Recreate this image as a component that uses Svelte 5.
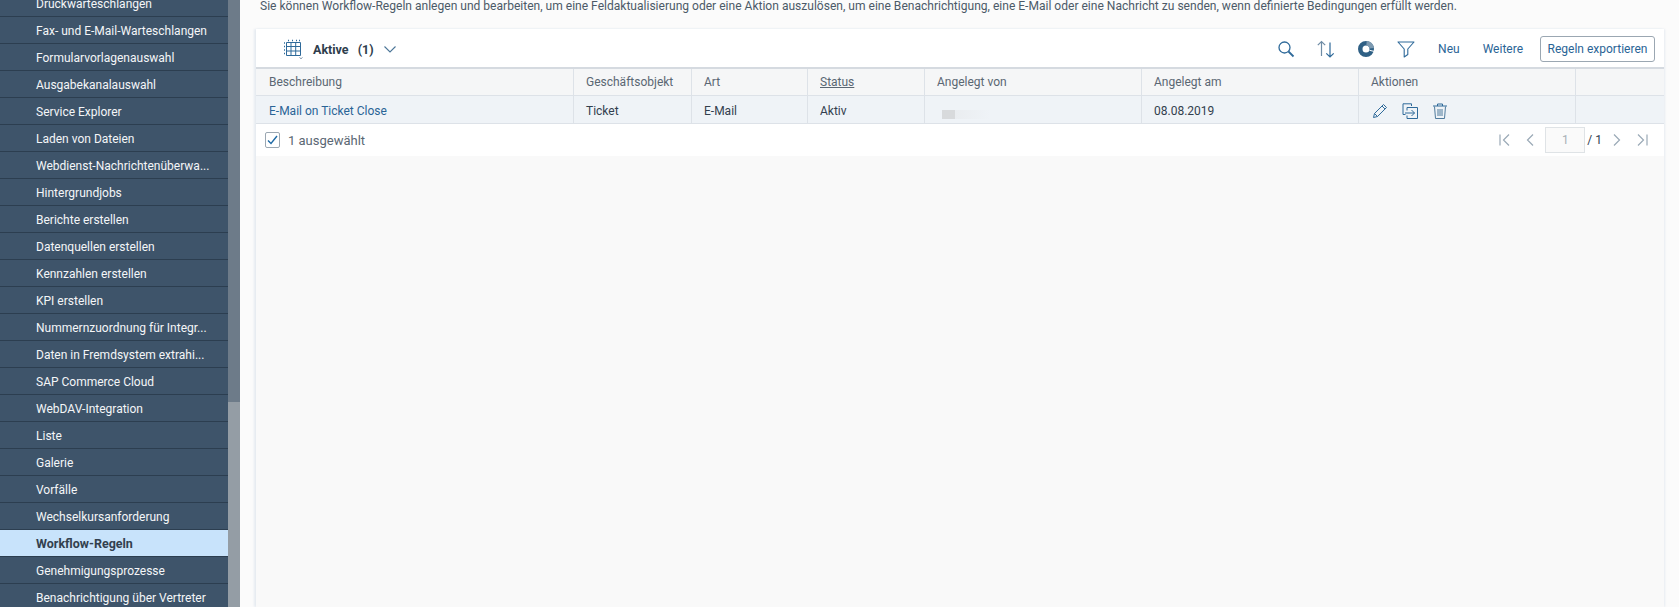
<script lang="ts">
	const navItems = [
		'Druckwarteschlangen',
		'Fax- und E-Mail-Warteschlangen',
		'Formularvorlagenauswahl',
		'Ausgabekanalauswahl',
		'Service Explorer',
		'Laden von Dateien',
		'Webdienst-Nachrichtenüberwa...',
		'Hintergrundjobs',
		'Berichte erstellen',
		'Datenquellen erstellen',
		'Kennzahlen erstellen',
		'KPI erstellen',
		'Nummernzuordnung für Integr...',
		'Daten in Fremdsystem extrahi...',
		'SAP Commerce Cloud',
		'WebDAV-Integration',
		'Liste',
		'Galerie',
		'Vorfälle',
		'Wechselkursanforderung',
		'Workflow-Regeln',
		'Genehmigungsprozesse',
		'Benachrichtigung über Vertreter'
	];
	const active = 'Workflow-Regeln';

	const columns = [
		{ label: 'Beschreibung' },
		{ label: 'Geschäftsobjekt' },
		{ label: 'Art' },
		{ label: 'Status', sorted: true },
		{ label: 'Angelegt von' },
		{ label: 'Angelegt am' },
		{ label: 'Aktionen' },
		{ label: '' }
	];
</script>

<div class="page">
	<nav class="sidebar">
		<ul class="nav-list">
			{#each navItems as item}
				<li class:active={item === active}>{item}</li>
			{/each}
		</ul>
		<div class="scrollbar"><div class="thumb"></div></div>
	</nav>

	<main class="main">
		<p class="intro">
			Sie können Workflow-Regeln anlegen und bearbeiten, um eine Feldaktualisierung oder eine Aktion auszulösen, um eine Benachrichtigung, eine E-Mail oder eine Nachricht zu senden, wenn definierte Bedingungen erfüllt werden.
		</p>

		<section class="card">
			<header class="toolbar">
				<div class="view-select">
					<svg class="grid-icon" width="20" height="20" viewBox="0 0 20 20" fill="none" stroke="#2f6a9a" stroke-width="1">
						<path d="M3.500 3.500h14v13h-14zM3.500 7.500h14M3.500 12h14M8 3.500v13M12.700 3.500v13" />
						<path d="M1 4h1M1 7.500h1M1 11h1M1 14.500h1M5 1.500h1M9 1.500h1M13 1.500h1M16 1.500h1" stroke-width="1.400" />
						<path d="M16.500 18.500l1.500 1.200 1.500-1.200" stroke="#7d93a8" />
					</svg>
					<span class="view-title">Aktive</span>
					<span class="view-count">(1)</span>
					<svg width="14" height="9" viewBox="0 0 14 9" fill="none" stroke="#4b7597" stroke-width="1.100">
						<path d="M1.500 1.500L7 7l5.500-5.500" />
					</svg>
				</div>

				<div class="tools">
					<svg class="tool" width="18" height="18" viewBox="0 0 18 18" fill="none" stroke="#2f6a9a" stroke-width="1.300">
						<circle cx="7.500" cy="7.500" r="5.500" />
						<path d="M11.500 11.500L16.500 16.500" stroke-width="1.800" />
					</svg>
					<svg class="tool" width="20" height="20" viewBox="0 0 20 20" fill="none" stroke="#6f8ca5" stroke-width="1.200">
						<path d="M5.500 17V2.500M1.800 6.200L5.500 2.500l3.700 3.700" />
						<path d="M14 3.500V18M10.300 14.300L14 18l3.700-3.700" stroke="#2f6a9a" />
					</svg>
					<svg class="tool donut" width="18" height="18" viewBox="0 0 18 18" fill="none" stroke-width="4.500">
						<circle cx="9" cy="9" r="5.750" stroke="#2f6085" />
						<path d="M9.500 3.270A5.750 5.750 0 0 1 14.700 8.200" stroke="#7d9ab1" />
						<path d="M12.500 10.300l5 1.200" stroke="#fff" stroke-width="1" />
					</svg>
					<svg class="tool last-tool" width="18" height="18" viewBox="0 0 18 18" fill="none" stroke="#2f6a9a" stroke-width="1.100">
						<path d="M1 2h16l-6.200 7v5.500l-3.600 2.500V9z" stroke-linejoin="round" />
					</svg>
					<button class="text-btn neu">Neu</button>
					<button class="text-btn">Weitere</button>
					<button class="outline-btn">Regeln exportieren</button>
				</div>
			</header>

			<div class="row head">
				{#each columns as col}
					<div class="cell"><span class:sorted={col.sorted}>{col.label}</span></div>
				{/each}
			</div>

			<div class="row body">
				<div class="cell"><span class="link">E-Mail on Ticket Close</span></div>
				<div class="cell">Ticket</div>
				<div class="cell">E-Mail</div>
				<div class="cell">Aktiv</div>
				<div class="cell"><span class="redacted"></span></div>
				<div class="cell">08.08.2019</div>
				<div class="cell actions">
					<svg width="16" height="16" viewBox="0 0 16 16" fill="none" stroke="#2f6a9a" stroke-width="1">
						<path d="M1.500 14.500l1-4L11.500 1.500l3 3-9 9zM2.500 10.500l3 3M10 3l3 3" stroke-linejoin="round" />
					</svg>
					<svg width="16" height="16" viewBox="0 0 16 16" fill="none" stroke="#2f6a9a" stroke-width="1">
						<path d="M3.500 11.500H1V.8h8.500V3" />
						<path d="M5 7.500v-3h10.500v11H5v-3" />
						<path d="M3 10h9.500M9.500 7l3 3-3 3" />
					</svg>
					<svg width="16" height="16" viewBox="0 0 16 16" fill="none" stroke="#4f7a9c" stroke-width="1">
						<path d="M1 3h14M5.500 3V1h5v2" stroke="#2f6a9a" />
						<path d="M2.500 3.500l1 12h9l1-12M6 6v7M8 6v7M10 6v7" />
					</svg>
				</div>
				<div class="cell"></div>
			</div>

			<footer class="table-foot">
				<div class="selected">
					<span class="checkbox">
						<svg width="11" height="10" viewBox="0 0 11 10" fill="none" stroke="#1f6aa5" stroke-width="1.400">
							<path d="M1 5.500L4 8.500 10 1" />
						</svg>
					</span>
					<span>1 ausgewählt</span>
				</div>
				<div class="pager">
					<svg width="14" height="14" viewBox="0 0 14 14" fill="none" stroke="#9aa9b6" stroke-width="1.200"><path d="M2 1.500v11M11 1.500L5.500 7l5.500 5.500" /></svg>
					<svg class="prev" width="14" height="14" viewBox="0 0 14 14" fill="none" stroke="#9aa9b6" stroke-width="1.200"><path d="M10 1.500L4.500 7l5.500 5.500" /></svg>
					<span class="page-input">1</span>
					<span class="page-total">/ 1</span>
					<svg class="next" width="14" height="14" viewBox="0 0 14 14" fill="none" stroke="#9aa9b6" stroke-width="1.200"><path d="M4 1.500L9.500 7 4 12.500" /></svg>
					<svg width="14" height="14" viewBox="0 0 14 14" fill="none" stroke="#9aa9b6" stroke-width="1.200"><path d="M12 1.500v11M3 1.500L8.500 7 3 12.500" /></svg>
				</div>
			</footer>

			<div class="empty"></div>
		</section>
	</main>
</div>

<style>
	:global(body) {
		margin: 0;
		background: #fbfbfb;
	}

	.page {
		display: flex;
		height: 607px;
		overflow: hidden;
		font-family: Roboto, 'Liberation Sans', sans-serif;
		font-size: 12px;
	}

	.sidebar {
		display: flex;
		width: 240px;
		flex: none;
	}

	.nav-list {
		width: 228px;
		margin: -10px 0 0;
		padding: 0;
		list-style: none;
		background: #3e546a;
	}

	.nav-list li {
		box-sizing: border-box;
		height: 27px;
		padding-left: 36px;
		border-bottom: 1px solid #2c3e50;
		color: #f4f6f8;
		line-height: 28px;
		white-space: nowrap;
	}

	.nav-list li.active {
		background: #c8e3fb;
		color: #32404e;
		font-size: 12.500px;
		font-weight: 700;
	}

	.scrollbar {
		width: 12px;
		background: #949da5;
	}

	.thumb {
		height: 402px;
		background: #6d7b89;
	}

	.main {
		display: flex;
		flex: 1;
		flex-direction: column;
		min-width: 0;
		padding-left: 16px;
		padding-right: 15px;
	}

	.intro {
		margin: 0;
		height: 29px;
		padding-left: 4px;
		color: #4c5a68;
		font-size: 12.050px;
		line-height: 13px;
		white-space: nowrap;
	}

	.card {
		display: flex;
		flex: 1;
		flex-direction: column;
		background: #f9f9f9;
		box-shadow: -2px 0 2px #e6ebf1, 1px 0 2px #e6ebf1;
	}

	.toolbar {
		display: flex;
		align-items: center;
		justify-content: space-between;
		box-sizing: border-box;
		height: 40px;
		padding: 2px 9px 0 27px;
		background: #fff;
		border-bottom: 2px solid #d5dae0;
	}

	.view-select {
		display: flex;
		align-items: center;
		color: #2e3d4c;
		font-size: 12.500px;
		font-weight: 700;
	}

	.grid-icon {
		margin-right: 10px;
	}

	.view-count {
		margin-left: 9px;
		margin-right: 9px;
	}

	.tools {
		display: flex;
		align-items: center;
	}

	.tool {
		margin-right: 21px;
	}

	.donut {
		margin-right: 22px;
	}

	.last-tool {
		margin-right: 23px;
	}

	.text-btn {
		padding: 0;
		border: 0;
		background: none;
		color: #2a6496;
		font: inherit;
	}

	.neu {
		margin-right: 23px;
	}

	.outline-btn {
		box-sizing: border-box;
		width: 115px;
		height: 26px;
		margin-left: 17px;
		padding: 0;
		border: 1px solid #9ba7b2;
		border-radius: 3px;
		background: #fff;
		color: #2a6496;
		font: inherit;
	}

	.row {
		display: grid;
		grid-template-columns: 317.500px 118px 116px 117px 217px 217px 217px 89px;
		height: 27px;
		border-bottom: 1px solid #dde2e8;
	}

	.cell {
		display: flex;
		align-items: center;
		box-sizing: border-box;
		padding-left: 12.500px;
		border-right: 1px solid #dde2e8;
		color: #32404e;
		white-space: nowrap;
	}

	.cell:first-child {
		padding-left: 13px;
	}

	.cell:last-child {
		border-right: 0;
	}

	.head {
		height: 26px;
		background: #f5f6f7;
	}

	.head .cell {
		color: #5a6773;
	}

	.sorted {
		text-decoration: underline;
	}

	.body {
		background: #eff3f7;
	}

	.body .cell {
		padding-top: 2px;
	}

	.link {
		color: #2a6496;
	}

	.redacted {
		width: 48px;
		height: 9px;
		margin: 8px 0 0 5px;
		background: linear-gradient(90deg, #d8dadc 13px, #eaedf0 13px, #eff3f7 48px);
	}

	.actions {
		gap: 14px;
		padding-left: 13px;
	}

	.table-foot {
		display: flex;
		align-items: center;
		justify-content: space-between;
		box-sizing: border-box;
		height: 32px;
		padding: 0 15px 0 9px;
		background: #fff;
		color: #5a6773;
		font-size: 13px;
	}

	.selected {
		display: flex;
		align-items: center;
		gap: 8px;
	}

	.checkbox {
		display: flex;
		align-items: center;
		justify-content: center;
		box-sizing: border-box;
		width: 15px;
		height: 16px;
		border: 1px solid #9ba7b2;
		border-radius: 2px;
	}

	.pager {
		display: flex;
		align-items: center;
	}

	.prev {
		margin: 0 8px 0 11px;
	}

	.next {
		margin: 0 11px 0 8px;
	}

	.page-input {
		box-sizing: border-box;
		width: 40px;
		height: 26px;
		border: 1px solid #dfe3e6;
		background: #fafafa;
		color: #a8b0b7;
		font-size: 12px;
		line-height: 24px;
		text-align: center;
	}

	.page-total {
		margin-left: 2px;
		color: #32404e;
		font-size: 12px;
	}

	.empty {
		flex: 1;
	}
</style>
